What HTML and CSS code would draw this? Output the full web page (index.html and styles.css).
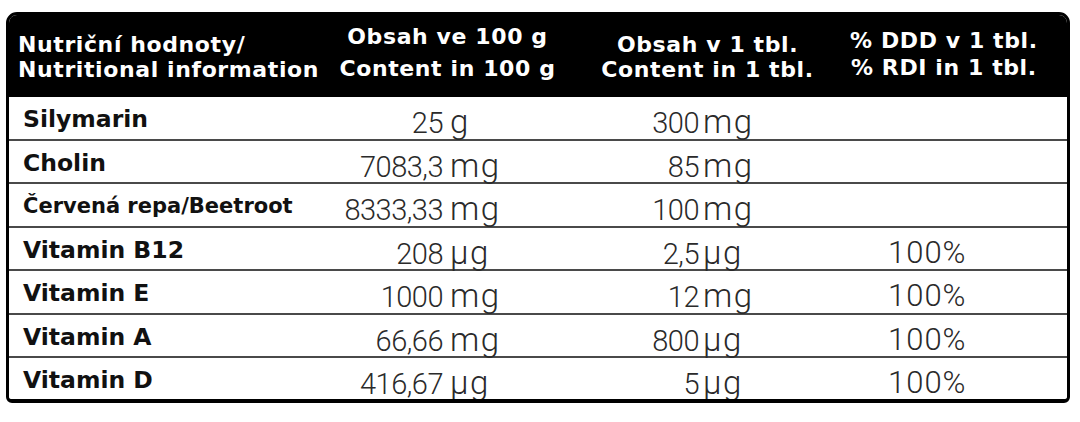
FILE: index.html
```html
<!DOCTYPE html>
<html lang="cs">
<head>
<meta charset="utf-8">
<title>Nutriční hodnoty</title>
<link rel="stylesheet" href="styles.css">
</head>
<body>
<div class="panel">
  <div class="head">
    <div class="hc h1">Nutriční hodnoty/<br>Nutritional information</div>
    <div class="hc h2">Obsah ve 100 g<br>Content in 100 g</div>
    <div class="hc h3">Obsah v 1 tbl.<br>Content in 1 tbl.</div>
    <div class="hc h4">% DDD v 1 tbl.<br>% RDI in 1 tbl.</div>
  </div>
  <div class="rows">
    <div class="row">
      <div class="label">Silymarin</div>
      <div class="val v2"><span class="num">25</span><span class="unit">g</span></div>
      <div class="val v3"><span class="num">300</span><span class="unit">mg</span></div>
      <div class="pct"></div>
    </div>
    <div class="row">
      <div class="label">Cholin</div>
      <div class="val v2"><span class="num">7083,3</span><span class="unit">mg</span></div>
      <div class="val v3"><span class="num">85</span><span class="unit">mg</span></div>
      <div class="pct"></div>
    </div>
    <div class="row">
      <div class="label small">Červená repa/Beetroot</div>
      <div class="val v2"><span class="num">8333,33</span><span class="unit">mg</span></div>
      <div class="val v3"><span class="num">100</span><span class="unit">mg</span></div>
      <div class="pct"></div>
    </div>
    <div class="row">
      <div class="label">Vitamin B12</div>
      <div class="val v2"><span class="num">208</span><span class="unit">µg</span></div>
      <div class="val v3"><span class="num">2,5</span><span class="unit">µg</span></div>
      <div class="pct">100%</div>
    </div>
    <div class="row">
      <div class="label">Vitamin E</div>
      <div class="val v2"><span class="num">1000</span><span class="unit">mg</span></div>
      <div class="val v3"><span class="num">12</span><span class="unit">mg</span></div>
      <div class="pct">100%</div>
    </div>
    <div class="row">
      <div class="label">Vitamin A</div>
      <div class="val v2"><span class="num">66,66</span><span class="unit">mg</span></div>
      <div class="val v3"><span class="num">800</span><span class="unit">µg</span></div>
      <div class="pct">100%</div>
    </div>
    <div class="row last">
      <div class="label">Vitamin D</div>
      <div class="val v2"><span class="num">416,67</span><span class="unit">µg</span></div>
      <div class="val v3"><span class="num">5</span><span class="unit">µg</span></div>
      <div class="pct">100%</div>
    </div>
  </div>
</div>
</body>
</html>
```
FILE: styles.css
```css
html, body {
  margin: 0;
  background: #fff;
}
body {
  padding: 12px 0 0 6px;
}
.panel {
  width: 1064px;
  height: 391px;
  box-sizing: border-box;
  border: 3px solid #000;
  border-bottom-width: 4px;
  border-radius: 11px 11px 6px 6px;
  overflow: hidden;
  display: flex;
  flex-direction: column;
  background: #fff;
}
.head {
  background: #000;
  color: #fff;
  height: 82px;
  flex: none;
  display: grid;
  grid-template-columns: 321px 235px 285px 1fr;
  font-family: "DejaVu Sans", sans-serif;
  font-weight: bold;
  font-size: 22px;
  letter-spacing: 0.6px;
  white-space: nowrap;
}
.hc { box-sizing: border-box; }
.h1 { padding: 17px 0 0 9px; line-height: 25px; letter-spacing: 0.6px; }
.h2 { padding-top: 6px; line-height: 32px; text-align: center; }
.h3 { padding-top: 17px; line-height: 25px; text-align: center; }
.h4 { padding: 12px 34px 0 0; line-height: 27px; text-align: center; }

.rows {
  flex: 1;
  display: flex;
  flex-direction: column;
}
.row {
  height: 43.5px;
  flex: none;
  box-sizing: border-box;
  border-bottom: 2px solid #4a4a4a;
  display: grid;
  grid-template-columns: 321px 235px 285px 1fr;
  align-items: center;
}
.row.last {
  flex: 1;
  border-bottom: none;
}
.label {
  padding-left: 14px;
  font-family: "DejaVu Sans", sans-serif;
  font-weight: bold;
  font-size: 23.5px;
  color: #111;
  white-space: nowrap;
}
.label.small { font-size: 21px; }
.val, .pct {
  display: flex;
  align-items: baseline;
  padding-top: 5px;
  font-family: Roboto, sans-serif;
  font-weight: 300;
  color: #2a2a2a;
  white-space: nowrap;
}
.num {
  font-size: 29px;
  letter-spacing: -0.5px;
  text-align: right;
}
.unit {
  font-size: 33px;
  letter-spacing: 1.5px;
}
.v2 .num { width: 113px; }
.v2 .unit { margin-left: 7px; }
.v3 .num { width: 134px; }
.v3 .unit { margin-left: 4px; }
.pct {
  padding-left: 38px;
  font-size: 31px;
  letter-spacing: 1px;
}
```
